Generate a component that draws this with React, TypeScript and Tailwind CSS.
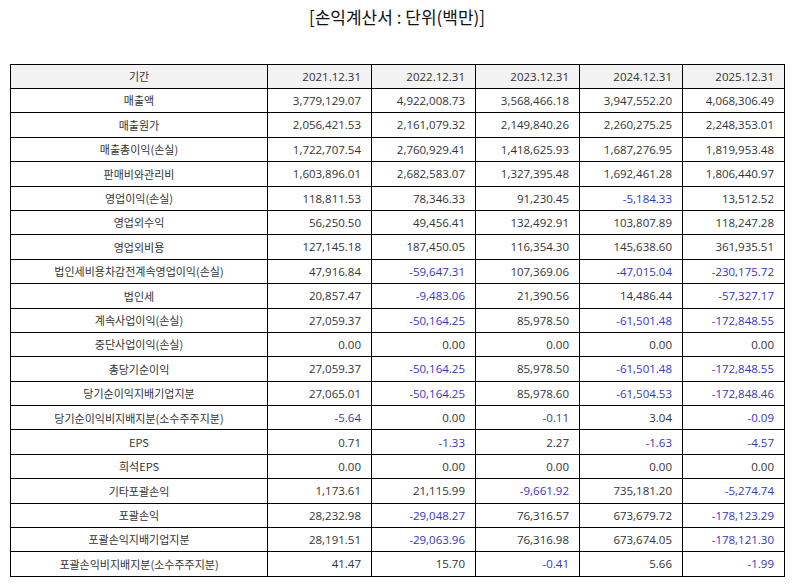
import React from "react";

const years = ["2021.12.31", "2022.12.31", "2023.12.31", "2024.12.31", "2025.12.31"];

const rows: [string, string[]][] = [
  ["매출액", ["3,779,129.07", "4,922,008.73", "3,568,466.18", "3,947,552.20", "4,068,306.49"]],
  ["매출원가", ["2,056,421.53", "2,161,079.32", "2,149,840.26", "2,260,275.25", "2,248,353.01"]],
  ["매출총이익(손실)", ["1,722,707.54", "2,760,929.41", "1,418,625.93", "1,687,276.95", "1,819,953.48"]],
  ["판매비와관리비", ["1,603,896.01", "2,682,583.07", "1,327,395.48", "1,692,461.28", "1,806,440.97"]],
  ["영업이익(손실)", ["118,811.53", "78,346.33", "91,230.45", "-5,184.33", "13,512.52"]],
  ["영업외수익", ["56,250.50", "49,456.41", "132,492.91", "103,807.89", "118,247.28"]],
  ["영업외비용", ["127,145.18", "187,450.05", "116,354.30", "145,638.60", "361,935.51"]],
  ["법인세비용차감전계속영업이익(손실)", ["47,916.84", "-59,647.31", "107,369.06", "-47,015.04", "-230,175.72"]],
  ["법인세", ["20,857.47", "-9,483.06", "21,390.56", "14,486.44", "-57,327.17"]],
  ["계속사업이익(손실)", ["27,059.37", "-50,164.25", "85,978.50", "-61,501.48", "-172,848.55"]],
  ["중단사업이익(손실)", ["0.00", "0.00", "0.00", "0.00", "0.00"]],
  ["총당기순이익", ["27,059.37", "-50,164.25", "85,978.50", "-61,501.48", "-172,848.55"]],
  ["당기순이익지배기업지분", ["27,065.01", "-50,164.25", "85,978.60", "-61,504.53", "-172,848.46"]],
  ["당기순이익비지배지분(소수주주지분)", ["-5.64", "0.00", "-0.11", "3.04", "-0.09"]],
  ["EPS", ["0.71", "-1.33", "2.27", "-1.63", "-4.57"]],
  ["희석EPS", ["0.00", "0.00", "0.00", "0.00", "0.00"]],
  ["기타포괄손익", ["1,173.61", "21,115.99", "-9,661.92", "735,181.20", "-5,274.74"]],
  ["포괄손익", ["28,232.98", "-29,048.27", "76,316.57", "673,679.72", "-178,123.29"]],
  ["포괄손익지배기업지분", ["28,191.51", "-29,063.96", "76,316.98", "673,674.05", "-178,121.30"]],
  ["포괄손익비지배지분(소수주주지분)", ["41.47", "15.70", "-0.41", "5.66", "-1.99"]],
];

// numbers use a wider latin face, hangul falls back to Noto CJK
const numFont = { fontFamily: '"Open Sans", "Noto Sans CJK KR", sans-serif' };

export default function App() {
  return (
    <div
      className="w-[794px] h-[586px] bg-white text-[#333] overflow-hidden"
      style={{ fontFamily: '"Noto Sans CJK KR", "Noto Sans", sans-serif' }}
    >
      <h1 className="text-center text-[17px] leading-[20px] pt-[7px] h-[64px] font-normal text-[#111]">
        [손익계산서 : 단위(백만)]
      </h1>
      <table className="ml-[10px] w-[774px] table-fixed border-collapse text-[11px]">
        <colgroup>
          <col className="w-[257px]" />
          <col className="w-[104px]" />
          <col className="w-[104px]" />
          <col className="w-[104px]" />
          <col className="w-[103px]" />
          <col className="w-[102px]" />
        </colgroup>
        <thead>
          <tr className="bg-[#f2f2f2]">
            <th className="h-[24px] border border-black font-normal text-center p-0">기간</th>
            {years.map((y) => (
              <th
                key={y}
                style={numFont}
                className="h-[24px] border border-black font-normal text-right text-[11.5px] pr-[10px] p-0"
              >
                {y}
              </th>
            ))}
          </tr>
        </thead>
        <tbody>
          {rows.map(([label, vals]) => (
            <tr key={label}>
              <td className="h-[24.4px] border border-black text-center p-0">{label}</td>
              {vals.map((v, i) => (
                <td
                  key={i}
                  style={numFont}
                  className={`h-[24.4px] border border-black text-right text-[11.5px] pr-[10px] p-0 ${
                    v.startsWith("-") ? "text-[#3535c8]" : ""
                  }`}
                >
                  {v}
                </td>
              ))}
            </tr>
          ))}
        </tbody>
      </table>
    </div>
  );
}
